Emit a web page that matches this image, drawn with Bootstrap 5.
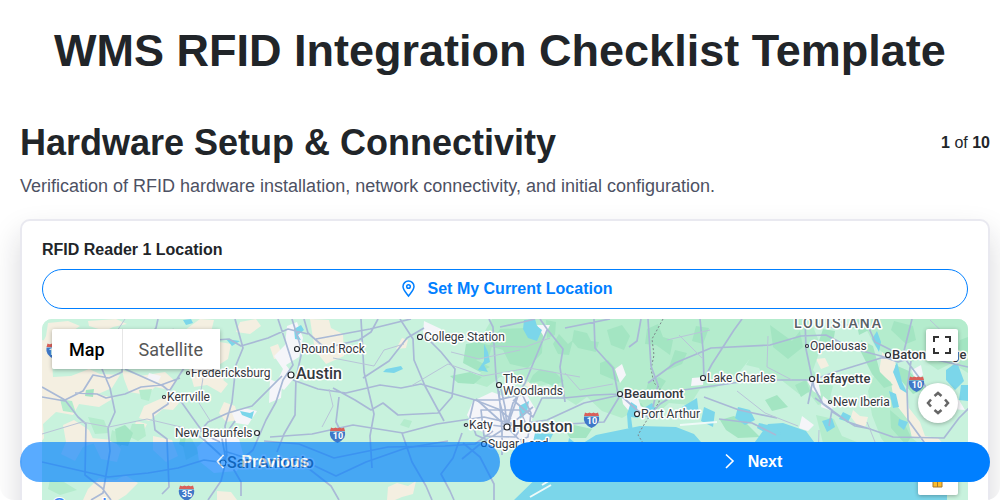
<!DOCTYPE html>
<html lang="en">
<head>
<meta charset="utf-8">
<meta name="viewport" content="width=device-width, initial-scale=1">
<title>WMS RFID Integration Checklist Template</title>
<link rel="stylesheet" href="https://cdn.jsdelivr.net/npm/bootstrap@5.3.0/dist/css/bootstrap.min.css">
<style>
body{font-family:"Liberation Sans",Arial,sans-serif;color:#212529;background:#fff}
.sheet{height:100vh;overflow-y:auto;scrollbar-width:none;border-radius:14px;padding:23px 10px 0 20px}
.sheet::-webkit-scrollbar{display:none}
.doc-title{font-size:45px;line-height:56px;margin:0 10px 40px 0}
.section-title{font-size:36px;line-height:48px}
.section-note{font-size:18px;line-height:27px;color:#4d5163;margin:6px 0 19px}
.panel{border:2px solid #e9e9f0;border-radius:10px;padding:17px 20px 20px;box-shadow:0 15px 30px rgba(25,25,40,.17)}
.field-name{line-height:24px;margin-bottom:7px}
.icon-gap{gap:10px}
.btn-locate{height:40px;color:#007fff;border:1px solid #007fff;background:#fff}
.btn-locate:hover{background:#eef6ff;color:#007fff}
.map-box{height:400px;margin-top:10px;border-radius:10px;font-family:Roboto,sans-serif;background:#c8f2dd}
.map-box>svg{width:100%;height:100%}
.map-types{top:10px;left:10px;box-shadow:0 1px 4px rgba(0,0,0,.3);border-radius:2px}
.map-types button{height:40px;padding:0 17px;border:0;background:#fff;font-size:18px;color:#565656}
.map-types button:first-child{color:#000;font-weight:500;border-radius:2px 0 0 2px}
.map-types button:last-child{border-left:1px solid #e6e6e6;padding-left:16px}
.map-tools{top:10px;right:10px}
.map-tools button{border:0;background:#fff;padding:0;box-shadow:0 1px 4px rgba(0,0,0,.3)}
.tool-full{width:32px;height:32px;border-radius:2px}
.tool-pan{width:40px;height:40px;border-radius:50%;margin-top:22px}
.tool-man{width:40px;height:40px;border-radius:2px;margin-top:32px}
.pager{left:20px;right:10px;bottom:18px;gap:10px}
.pager .btn{height:40px;background:#007fff;color:#fff;border:0}
.pager .btn:disabled{opacity:.65}
.label{fill:#34383e;stroke:#fff;stroke-width:3px;stroke-linejoin:round;paint-order:stroke;font-size:12px}
.label .city{font-size:13px;font-weight:500}
.label .metro{font-size:16px;font-weight:500}
.label .state{font-size:14px;font-weight:500;letter-spacing:2px;fill:#596166}
</style>
</head>
<body>
<main class="sheet">
<h1 class="doc-title text-center fw-bold">WMS RFID Integration Checklist Template</h1>
<div class="d-flex justify-content-between align-items-center">
<h2 class="section-title fw-bold mb-0">Hardware Setup &amp; Connectivity</h2>
<div><b>1</b> of <b>10</b></div>
</div>
<p class="section-note">Verification of RFID hardware installation, network connectivity, and initial configuration.</p>
<section class="panel bg-white">
<h3 class="field-name fs-6 fw-bold">RFID Reader 1 Location</h3>
<button type="button" class="btn btn-locate icon-gap w-100 rounded-pill fw-bold d-flex align-items-center justify-content-center py-0">
<svg width="20" height="20" viewBox="0 0 20 20" fill="none" stroke="currentColor" stroke-width="1.500" aria-hidden="true"><path d="M10.500 17C9 14.700 5 11.200 5 7.500a5.500 5.500 0 0 1 11 0C16 11.200 12 14.700 10.500 17z"/><circle cx="10.500" cy="7.500" r="1.800"/></svg>
Set My Current Location
</button>
<div class="map-box position-relative overflow-hidden">
<svg viewBox="42 319 926 400" preserveAspectRatio="xMinYMin slice" role="img" aria-label="Map of south-east Texas and Louisiana">
<defs>
<g id="shield"><path d="M-6.500-7.500Q-4-6-2-7.500Q0-6 2-7.500Q4-6 6.500-7.500L7.500-4H-7.500z" fill="#d9605a"/><path d="M-7.500-3.500h15Q9 4 0 8Q-9 4-7.500-3.500z" fill="#3f78c8"/></g>
</defs>
<rect x="42" y="319" width="926" height="400" fill="#c8f2dd"/>
<!-- sandy plains -->
<g fill="#f4efe1">
<path d="M48 323l20-2 12 5-9 6 18 8-5 12-18-4-18 8-6-12 4-8zM88 321l28-2 11 5-14 3-8 4-16-5zM42 340l9 2 2 35 18-1 18-7 11 5 20 1-8 13-14 6 16 4-15 9-20-3-6 11-17-3-13 12 1 14-6 8-5-9z"/>
<path d="M122 370l18 6 25-4 11 10-7 8-14-3-8 8-18-3-5-13zM158 350l42-31 14 1-5 20 22 4-3 15-17 11 17 14-7 9-14-8-13 2-5-18-14-6zM160 399l11-4 8 8-6 7-10-1-14 12-10-3 5-12zM203 371l13-3 8 12-14 3zM240 322l16-3 5 7-11 8-14-2zM310 319l19 1 2 8 12 6 1 22-18 8-11-14-3-18zM270 347l8-3 5 13-9 2zM224 402l11 4 4 14-13 2-7-9z"/>
<path d="M63 425l11-5 15 10 6 13-12 4-8 14-14-7 5-12zM91 438l22 2 8 9-4 13-16-3zM136 421l11 3-4 8-9-3zM153 436l19 4 6 16-12 6-13-12zM99 478l17 2 9-5 13 8-12 12-8 5H83l5-11zM217 491l14 1 6 8h-20zM388 487l9-4 11 3 8-5-3 13-11 3-7 3h-8zM402 338l6 2-2 8-10 1zM532 378l7-1 2 8-7 6-9-6zM505 400h10v7h-10zM686 375l13-3 4 6-9 7zM816 359l9-1 4 8-8 3z"/>
<path d="M884 341l8 3 5 31 9 15 3 18 11 14 5 14 13 2 8 9-2 8-17-9-8-8-13-3-10-14-4-17-4-13-9-19zM853 410l7 6 8 1-3 11-8-3-6-8zM919 326l6 3-3 7-5-4z"/>
</g>
<!-- woodland -->
<g fill="#b4eccd">
<path d="M492 319h284l-12 18 5 12-20 11-16 20-19 8-14 1-10 16-21-2-12 11-21-4-14 8-20-7-15-14-11 8-13-8-14-13-14 3-14-11-21 1-13 10-16-5 10-9-9-12 7-20z"/>
<path d="M758 319h52l8 20 1 14-6 17 9 12 11 4-4 16-11 3-10-13-9 2-19-15-15 1-6-12-13-3 8-13-5-13zM853 319h115v54l-16-10-14 7-16-11-11 3-10-10-13 5-13-11-10-19-16 2zM876 371l15 11 3 20 14 18 4 18 16 13v20l-17-11-15-2-15-20-9-23-4-24zM816 415l18 4 8 17 27 11 3 15-21 4-12-12-13 1z"/>
<path d="M60 399l12 2 4 12-13-2zM88 417l16 3 5 13-14 1zM139 390l13-1-3 12-8-2zM112 430l9 4-2 11-9-4zM132 424h12l2 12-8 5-10-5zM50 480l14 2 13 8-17 5-12-6zM180 433l12 6 7 14-13 7zM404 419l8 2-3 7-9-3z"/>
</g>
<g fill="#a3e5c2">
<path d="M500 329l25-1 18 5-1 20-14 15-18-4-7-14-14-4zM466 344l12-2 14 4-3 11-13 3 14 7-10 5-17-9zM450 376l20-4 12 5-8 7-16-1zM546 320l10 2-1 13-8 3zM559 334l9 10 5-4-4 15-11-1-5-10zM574 330l13 3 4 8 8 1-3 10-18-4-6-7zM607 330l15-5 8 11-6 14-13-5zM647 329l11-5 5 13 10 3-3 15-14-10-11-1zM540 369l15 3 9 9-10 5-13-5-12 2 4-8zM600 363l8-3 9 10 8 5-6 7-19-8zM648 382l11-5 7 4-8 12-12-2zM675 350l12 3-5 11-14 6zM696 326l13 2-6 16-11-3zM628 407l13-4 5 7-10 6zM574 425l18 4-6 9h-16l-5-8zM770 325l22 16 8-10 3 16-15 12-15-12zM795 385l11-5 4 11-9 6zM823 329l12 2-2 12-14-2zM856 320l12 2 1 8-10 5zM861 340l12 6 7 26 13 13-9 3-12-14-11-22zM894 321l19 5 3 14-10 4-15-14zM895 365l14 6 17 18-13 5-16-18zM765 400l12-5 11 12-16 4zM720 420l14-4 13 8 13 13-22 1-12-8zM890 410l13 11 8 16-5 8-15-17zM913 446l7 3 9 16-12-4zM960 340l8-3v17l-10-5zM115 429l10-4 8 8-5 13-11-2zM86 390l8-1-1 8-8-1zM117 439l7-7 3 9-7 5zM181 436l5 1-2 10-5-3z"/>
</g>
<!-- built-up areas -->
<g fill="#f5f5f9">
<path d="M287 326l10-4 6 16-4 19-13 8 9 12-11 13-8-6 7-15-9-13 11-11zM270 379l12 6-1 13-12 5zM205 440l19-10 15 9 5 18-7 14-23 2-15-12-2-14zM473 401l19-9 17 6 18-3 9 15-5 12 9 9-10 14-24 1-18-10-13-9-8-12zM424 321l17 8-6 14-12-10zM537 325h13l-6 12zM506 377l7 5-2 11-7-6zM615 369l7-5 4 11-6 8zM621 394l17 4 5 15-10 3-10-12zM638 405l9 4-5 9-7-7zM806 379l12 1 3 16-8-5zM823 396l10 8-1 7-11-4zM692 378l12-1-1 8-12 1zM947 399l12 1 6 10-15-1zM912 370l9-5 2 10-8 5zM802 416l12 9-6 6-9-3zM232 413l11-5 14 3-9 14-12-2zM149 373l12 3-3 6-11-3z"/>
</g>
<!-- water -->
<g fill="#7bd6ea">
<path d="M514 500l39-38 43-27 44-9 36 1 18 7 20 23 33-4 21-29 15-1 23 8 11 15 22 7 24 9 30 1 36 8 9-8 9 8v248H514z"/>
<path d="M524 320l11-1 2 7 5 4-5 11-9-3-5-9zM484 344l4 8 2 10-6 3 4 7-10-2 6-9zM386 369l15-3 2 3-9 4-11-1zM294 329l7-4 3 5-6 5 3 5-6-1zM226 339l14 2-8 5zM240 411l10 2 4-2-2 8-10-4zM183 320l8-1 2 4-7 2zM519 406l10-5-2 12-7 6zM631 402l6 4 1 12-7-1 2 15-5-4-1-14zM644 408l8-5 6 9-8 3zM682 407l15-9 2 17-17-2zM704 407l11 5-2 15-12-6zM738 407l12 3 5 10-10 5-10-7zM759 423l18 4 4 7-8 3-16-9zM822 421l10-3 3 9-8 5zM843 412l8 4-3 6-9-3zM897 362l5 20 6 12-8-5-7-17zM877 331l4 11-2 10-7-13zM946 370l11-8 7 19-9 9-9-10zM961 385h7v16l-9-1zM889 391l7 3 3 13-6 1zM899 419l9 3-4 8-6-5zM535 433l18 1-5 10 13 6-7 17-26 15 1-22zM569 438l10 8-3 14-10-7z"/>
</g>
<path d="M530 497l21-12M542 485l10-6M680 425l37-3" stroke="#effaf8" stroke-width="2" fill="none"/>
<path d="M663 319l-6 11-5 9 2 16-3 14 3 14 6 5-1 14-6 10-6 8-5 8-4 7 5 8 5 8v21" fill="none" stroke="#7c858a" stroke-dasharray="2 2"/>
<!-- main roads -->
<g fill="none" stroke="#a9b9d6" stroke-width="1.700" stroke-linejoin="round">
<path d="M42 387l23 13 18-9 10-16 16 3 13-6 1-18 22-13 11-13 2-9M65 400l13 17 8 7-1 51 17 13 9 12M42 397l23 4M75 393l22 1 9 4 19-4 16-7 20-2 19-7M102 369l8 19 5 24-7 16 2 23-7 42-12 7M125 369l18 8 20 9 17 14 12 17 13 18 15 7M180 337l23 4 26-2 12 7 27-8 20-9 20 5M170 390l14-22 18-7M169 389l-1 15-15 10 2 16 12 9 2 48-7 7M195 437l13-15 20-9 24-7 30-30M235 319l8 29-7 17-4 37-7 24 2 32 14 24 0 14M278 319l7 21 8 25-10 15-7 22-10 18-13 30-19 16M292 319l10 32-6 27-1 37-11 19-7 18"/>
<path d="M304 319l4 14 17 15 34-8 12-8 7-13M316 339l54-10 41-10M361 319l3 53 10 42-4 22 2 32M363 378l26-17 18-23 17-10M293 380l25 9 28 4 34-8 21 3 20-4 26 8 28 8 23 9 13 10M424 335l17 17 14 17-3 28-14 16-40 2-15-12-12 7-16-10-22-12M400 319l13 20 1 21 11 26 19 35M270 437l42-3 41-9 50 8 34-9 47-7 35 8M264 441l35 3 35 14 54-11 57-1 30-2 18-13"/>
<path d="M226 463l-22-3-26 8-30 5-40 4-66-15M226 461l-5 20-13 19M224 451l35 11 40-1 32 25 8 14M339 397l-3 25 8 16M402 433l10 29 14 24 6 14M226 460l-24-22-12-7M226 460l-4-21 13-18M226 460l30 6 40-9 40 19 30-14 40-14 42-7M462 433l-9 25-12 16 9 17 4 9M463 443l17 14 14 27v16"/>
<path d="M489 319l4 8 3 50 4 26 6 23M500 327l23-5 12-3M540 319l7 10 16 20-3 18 5 35M547 330l-22 53-12 20-7 24M565 328l45-9M594 319l1 29 18 20 5 26M629 347l8-6 4-22M619 394l18 16 11 7 12-13 23-14 37-5 33-5M648 319l3 47 7 19-5 22M507 426l40-6 37-17 36-8 35-3M510 429l39-4 55-3 17-28M513 400l20 17 9-19 22 0 30-3 24-1M507 427l-2-20-4-18M474 400h24l24-6 9 19-3 24-25 10-27-12-6-18zM481 410h39l5 12-10 15-31-1zM507 427l-31-28M507 427l26-20M507 427l-16-2-28 0M507 427l-28 18-17 14M507 427l20 21M499 391l3 40 0 24M519 393l-12 34"/>
<path d="M700 319l3 30 1 30 8-15 22-34 8-11M648 383l27-20 36-15 59-3 31-9 25-1 25 13 30 8 17 6 21-6 49 11M813 380l19-7 49-15 26-1M805 319l1 30 8 38 9 17 25 18 22 7 23 8 51 1 15-20 11-11 12-9M815 398l17 12-3 16M831 411l24 15 16 3M704 397l35 13 38 8M760 380h53l-5 24M865 319l10 23 28 14 21 28 10 19M903 355l9-36M911 361l-4 28 1 31 16 22 6 20M719 419l33 4 24 12"/>
</g>
<!-- minor roads -->
<g fill="none" stroke="#b8c4d8" stroke-width="1">
<path d="M42 434l40-12 27 5 38-8 38 9M125 319l-12 18-26 6M153 342l20-13 28 11M203 378l-4 25 12 19M333 358l41 8 10-16 20-6M329 389l4 17-11 21M411 386l37-22 35 12 46-8 51 9M490 346l35 1 25-9M451 352l28 7 41-9M565 373l15 17 33-6M667 340l43-10M679 335l24 24M737 391l28 22 33 13M768 336l-1 31 25 13M827 328l40-6M819 430l-1 30M867 422l12 30M930 320l26 25"/>
</g>
<g id="markers" fill="#fff" stroke="#25292e" stroke-width="1.200">
<circle cx="188" cy="373" r="1.500"/><circle cx="164" cy="397" r="1.500"/><circle cx="257" cy="433" r="2.500"/><circle cx="297" cy="349" r="2.500"/><circle cx="291" cy="375" r="3"/><circle cx="420" cy="337" r="2.500"/><circle cx="499" cy="385" r="2.500"/><circle cx="466" cy="425" r="1.500"/><circle cx="484" cy="444" r="2.500"/><circle cx="507" cy="427" r="3"/><circle cx="620" cy="394" r="2.500"/><circle cx="637" cy="414" r="2.500"/><circle cx="703" cy="378" r="2.500"/><circle cx="807" cy="346" r="1.500"/><circle cx="812" cy="379" r="2.500"/><circle cx="830" cy="402" r="1.500"/><circle cx="888" cy="355" r="2.500"/><circle cx="223" cy="463" r="3"/>
</g>
<g class="label">
<text x="191" y="377">Fredericksburg</text><text x="167" y="401">Kerrville</text><text x="175" y="437">New Braunfels</text><text x="301" y="353">Round Rock</text><text x="424" y="341">College Station</text><text x="503" y="383">The</text><text x="503" y="395">Woodlands</text><text x="469" y="429">Katy</text><text x="488" y="448">Sugar Land</text><text x="641" y="418">Port Arthur</text><text x="707" y="382">Lake Charles</text><text x="810" y="350">Opelousas</text><text x="833" y="406">New Iberia</text>
<text class="city" x="624" y="398">Beaumont</text><text class="city" x="816" y="383">Lafayette</text><text class="city" x="892" y="359">Baton Rouge</text>
<text class="metro" x="296" y="379">Austin</text><text class="metro" x="512" y="432">Houston</text><text class="metro" x="227" y="468">San Antonio</text>
<text class="state" x="794" y="328">LOUISIANA</text>
</g>
<g fill="#fff" font-size="9" font-weight="700" text-anchor="middle">
<use href="#shield" x="337.500" y="435"/><text x="338" y="439">10</text>
<use href="#shield" x="591.500" y="420"/><text x="592" y="424">10</text>
<use href="#shield" x="916.500" y="384"/><text x="917" y="388">10</text>
<use href="#shield" x="186.500" y="493"/><text x="187" y="497">35</text>
<use href="#shield" x="54" y="351"/><text x="54" y="355">10</text>
</g>
<text x="52" y="513" font-size="21" fill="#4285f4" stroke="#fff" stroke-width="2" paint-order="stroke">Google</text>
</svg>
<div class="map-types position-absolute d-flex"><button type="button">Map</button><button type="button">Satellite</button></div>
<div class="map-tools position-absolute d-flex flex-column align-items-end">
<button type="button" class="tool-full" aria-label="Full screen"><svg class="d-block mx-auto" width="18" height="18" viewBox="0 0 18 18" fill="none" stroke="#333" stroke-width="2"><path d="M1 6V1h5M12 1h5v5M17 12v5h-5M6 17H1v-5"/></svg></button>
<button type="button" class="tool-pan" aria-label="Move map"><svg class="d-block mx-auto" width="24" height="24" viewBox="0 0 24 24" fill="none" stroke="#666" stroke-width="2.500"><path d="M8.500 5l3.500-3 3.500 3M8.500 19l3.500 3 3.500-3M5 8.500L2 12l3 3.500M19 8.500l3 3.500-3 3.500"/></svg></button>
<button type="button" class="tool-man" aria-label="Street View"><svg class="d-block mx-auto" width="30" height="30" viewBox="0 0 30 30"><circle cx="14.500" cy="5" r="4" fill="#fbbc2c"/><path d="M9 10h11v9h-1v8h-9v-8H9z" fill="#fbbc2c" stroke="#a77a2c"/><path d="M14.500 18v9" stroke="#a77a2c"/></svg></button>
</div>
</div>
</section>
</main>
<nav class="pager position-fixed d-flex" aria-label="Checklist pages">
<button type="button" class="btn icon-gap rounded-pill fw-bold flex-fill w-50 d-flex align-items-center justify-content-center py-0" disabled><svg width="20" height="20" viewBox="0 0 20 20" fill="none" stroke="currentColor" stroke-width="1.600" aria-hidden="true"><path d="M12.500 3L6.500 9.500l6 6.500"/></svg>Previous</button>
<button type="button" class="btn icon-gap rounded-pill fw-bold flex-fill w-50 d-flex align-items-center justify-content-center py-0"><svg width="20" height="20" viewBox="0 0 20 20" fill="none" stroke="currentColor" stroke-width="1.600" aria-hidden="true"><path d="M8 2.500l7 6.500-7 7"/></svg>Next</button>
</nav>
<script src="https://cdn.jsdelivr.net/npm/bootstrap@5.3.0/dist/js/bootstrap.bundle.min.js"></script>
</body>
</html>
